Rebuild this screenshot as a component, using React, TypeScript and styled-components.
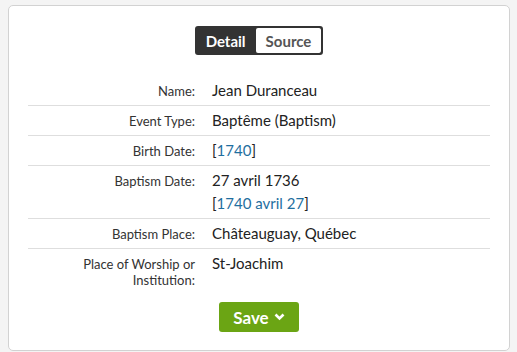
import styled, { createGlobalStyle } from 'styled-components';

// Page reset and base font
const GlobalStyle = createGlobalStyle`
  html, body {
    margin: 0;
    padding: 0;
    background: #f4f4f4;
    font-family: Lato, "Noto Sans", "Liberation Sans", sans-serif;
    color: #222;
  }
`;

// White card holding the record
const Card = styled.div`
  box-sizing: border-box;
  margin: 5px 7px 0 8px;
  height: 346px;
  background: #fff;
  border: 1px solid #d2d2d2;
  border-radius: 5px;
  padding: 20px 19px 0 19px;
  display: flex;
  flex-direction: column;
  align-items: center;
`;

// Detail / Source toggle
const Toggle = styled.div`
  box-sizing: border-box;
  display: flex;
  height: 29px;
  border: 2px solid #333;
  border-radius: 3px;
  background: #333;
  overflow: hidden;
`;

const ToggleButton = styled.button<{ $active?: boolean }>`
  border: none;
  margin: 0;
  height: 100%;
  padding: ${(p) => (p.$active ? '0 10px 0 9px' : '0 10px')};
  font-family: inherit;
  font-size: 15px;
  font-weight: 700;
  background: ${(p) => (p.$active ? '#333' : '#fff')};
  color: ${(p) => (p.$active ? '#fff' : '#555')};
  border-radius: ${(p) => (p.$active ? '0' : '2px')};
  cursor: pointer;
`;

// Field list
const Fields = styled.div`
  align-self: stretch;
  margin-top: 21px;
`;

const Row = styled.div<{ $last?: boolean }>`
  display: grid;
  grid-template-columns: 167px 1fr;
  column-gap: 17px;
  padding: 3px 0;
  border-bottom: ${(p) => (p.$last ? 'none' : '1px solid #dedede')};
`;

const Label = styled.div`
  text-align: right;
  font-size: 13px;
  line-height: 16px;
  padding-top: 4px;
  color: #333;
`;

const Value = styled.div`
  font-size: 15px;
  line-height: 23px;
  color: #222;
`;

const DateLink = styled.a`
  color: #1f6fa0;
  text-decoration: none;
`;

const SaveButton = styled.button`
  box-sizing: border-box;
  margin-top: 11px;
  display: flex;
  align-items: center;
  gap: 5px;
  height: 30px;
  padding: 0 14px 0 14px;
  border: none;
  border-radius: 3px;
  background: #6ba514;
  color: #fff;
  font-family: inherit;
  font-size: 17px;
  font-weight: 700;
  cursor: pointer;
`;

const Chevron = () => (
  <svg width="11" height="8" viewBox="0 0 11 8">
    <path d="M1.5 1.5 L5.5 5.5 L9.5 1.5" fill="none" stroke="#fff" strokeWidth="2.6" />
  </svg>
);

const App = () => {
  return (
    <>
      <GlobalStyle />
      <Card>
        <Toggle>
          <ToggleButton $active>Detail</ToggleButton>
          <ToggleButton>Source</ToggleButton>
        </Toggle>
        <Fields>
          <Row>
            <Label>Name:</Label>
            <Value>Jean Duranceau</Value>
          </Row>
          <Row>
            <Label>Event Type:</Label>
            <Value>Baptême (Baptism)</Value>
          </Row>
          <Row>
            <Label>Birth Date:</Label>
            <Value>
              [<DateLink href="#">1740</DateLink>]
            </Value>
          </Row>
          <Row>
            <Label>Baptism Date:</Label>
            <Value>
              27 avril 1736
              <br />[<DateLink href="#">1740 avril 27</DateLink>]
            </Value>
          </Row>
          <Row>
            <Label>Baptism Place:</Label>
            <Value>Châteauguay, Québec</Value>
          </Row>
          <Row $last>
            <Label>
              Place of Worship or
              <br />
              Institution:
            </Label>
            <Value>St-Joachim</Value>
          </Row>
        </Fields>
        <SaveButton>
          Save <Chevron />
        </SaveButton>
      </Card>
    </>
  );
};

export default App;
